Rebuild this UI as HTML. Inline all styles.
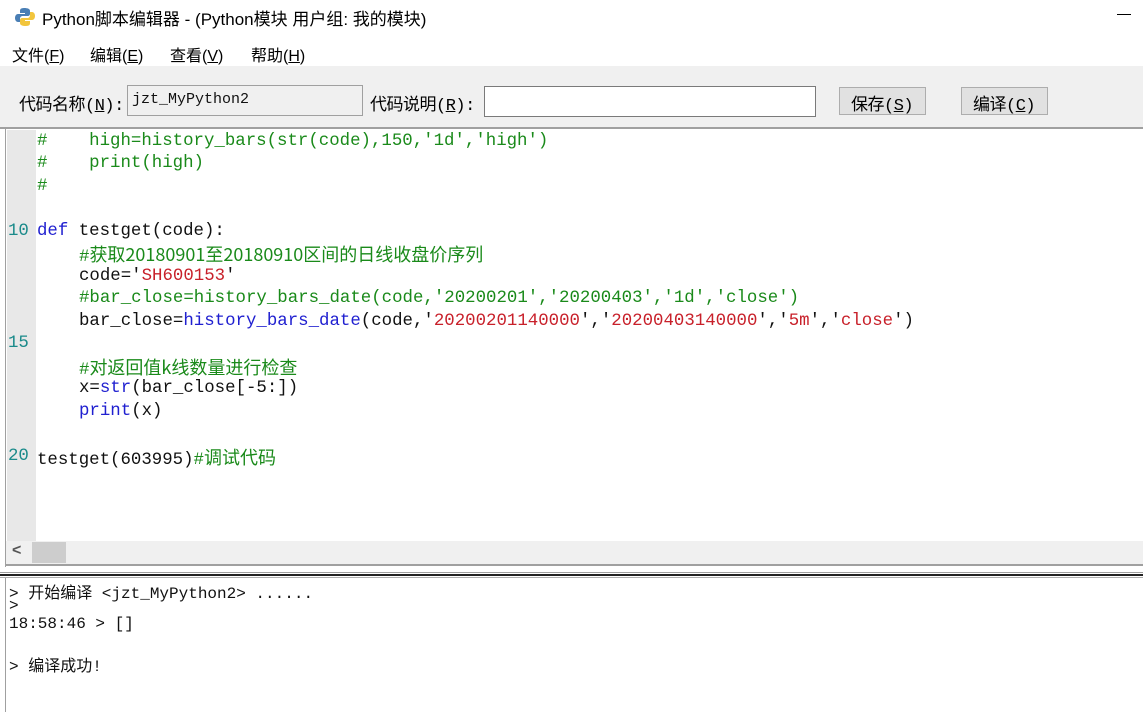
<!DOCTYPE html>
<html><head><meta charset="utf-8"><style>
*{margin:0;padding:0;box-sizing:border-box}
body{width:1143px;height:712px;overflow:hidden;background:#fff;position:relative;font-family:"Liberation Sans","Noto Sans CJK SC",sans-serif;}
.abs{position:absolute;white-space:pre}
.title{left:42px;top:5px;font-size:17px;color:#000}
.menu{top:42px;font-size:16px;color:#000}
.tb{position:absolute;left:0;top:66px;width:1143px;height:61px;background:#f0f0f0}
.lbl{font-family:"Liberation Mono","Noto Sans CJK SC",monospace;font-size:17px;color:#000;top:90px;letter-spacing:-0.5px}
.code{font-family:"Liberation Mono","Noto Sans CJK SC",monospace;font-size:17.4px;line-height:22px}
.cj{font-family:"Noto Sans CJK SC",sans-serif;font-size:18px;line-height:22px}
.g{color:#1a8a1a}.b{color:#2020d0}.r{color:#c8202a}.k{color:#111}.n{color:#1a8a8a}
.out{font-family:"Liberation Mono","Noto Sans CJK SC",monospace;font-size:16px;color:#111}
</style></head><body>
<svg class="abs" style="left:14px;top:6px" width="22" height="22" viewBox="0 0 22 22">
<path d="M10 2c-4 0-4 2-4 3v2h5v1H4c-2 0-3 2-3 4s1 4 3 4h2v-3c0-2 1-3 3-3h5c1 0 2-1 2-2V5c0-2-2-3-6-3z" fill="#4a7fb5"/>
<path d="M12 20c4 0 4-2 4-3v-2h-5v-1h7c2 0 3-2 3-4s-1-4-3-4h-2v3c0 2-1 3-3 3H8c-1 0-2 1-2 2v3c0 2 2 3 6 3z" fill="#f2c53d"/>
</svg>
<div class="abs title">Python脚本编辑器 - (Python模块 用户组: 我的模块)</div>
<div class="abs" style="left:1117px;top:14px;width:14px;height:1px;background:#000"></div>
<div class="abs menu" style="left:12px">文件(<u>F</u>)</div>
<div class="abs menu" style="left:90px">编辑(<u>E</u>)</div>
<div class="abs menu" style="left:170px">查看(<u>V</u>)</div>
<div class="abs menu" style="left:251px">帮助(<u>H</u>)</div>
<div class="tb"></div>
<div class="abs lbl" style="left:19px">代码名称(<u>N</u>):</div>
<div class="abs" style="left:127px;top:85px;width:236px;height:31px;border:1px solid #a0a0a0;background:#f0f0f0"></div>
<div class="abs code" style="left:132px;top:89px;font-size:15px;color:#111">jzt_MyPython2</div>
<div class="abs lbl" style="left:370px">代码说明(<u>R</u>):</div>
<div class="abs" style="left:484px;top:86px;width:332px;height:31px;border:1px solid #7a7a7a;background:#fff"></div>
<div class="abs" style="left:839px;top:87px;width:87px;height:28px;border:1px solid #adadad;background:#e1e1e1"></div>
<div class="abs lbl" style="left:851px;top:90px">保存(<u>S</u>)</div>
<div class="abs" style="left:961px;top:87px;width:87px;height:28px;border:1px solid #adadad;background:#e1e1e1"></div>
<div class="abs lbl" style="left:973px;top:90px">编译(<u>C</u>)</div>
<div class="abs" style="left:0;top:127px;width:1143px;height:2px;background:#a0a0a0"></div>
<div class="abs" style="left:5px;top:129px;width:1px;height:438px;background:#a0a0a0"></div>
<div class="abs" style="left:7px;top:130px;width:29px;height:411px;background:#e8e8e8"></div>
<div class="abs code" style="left:0;top:131px">
<div class="abs" style="left:37px;top:0"><span class="g">#    high=history_bars(str(code),150,'1d','high')</span></div>
<div class="abs" style="left:37px;top:22px"><span class="g">#    print(high)</span></div>
<div class="abs" style="left:37px;top:45px"><span class="g">#</span></div>
<div class="abs n" style="left:8px;top:90px">10</div>
<div class="abs" style="left:37px;top:90px"><span class="b">def</span> <span class="k">testget(code):</span></div>
<div class="abs g" style="left:79px;top:112px">#<span class="cj">获取20180901至20180910区间的日线收盘价序列</span></div>
<div class="abs" style="left:79px;top:135px"><span class="k">code='</span><span class="r">SH600153</span><span class="k">'</span></div>
<div class="abs g" style="left:79px;top:157px">#bar_close=history_bars_date(code,'20200201','20200403','1d','close')</div>
<div class="abs" style="left:79px;top:180px"><span class="k">bar_close=</span><span class="b">history_bars_date</span><span class="k">(code,'</span><span class="r">20200201140000</span><span class="k">','</span><span class="r">20200403140000</span><span class="k">','</span><span class="r">5m</span><span class="k">','</span><span class="r">close</span><span class="k">')</span></div>
<div class="abs n" style="left:8px;top:202px">15</div>
<div class="abs g" style="left:79px;top:225px">#<span class="cj">对返回值k线数量进行检查</span></div>
<div class="abs" style="left:79px;top:247px"><span class="k">x=</span><span class="b">str</span><span class="k">(bar_close[-5:])</span></div>
<div class="abs b" style="left:79px;top:270px">print<span class="k">(x)</span></div>
<div class="abs n" style="left:8px;top:315px">20</div>
<div class="abs" style="left:37px;top:315px"><span class="k">testget(603995)</span><span class="g">#<span class="cj">调试代码</span></span></div>
</div>
<div class="abs" style="left:6px;top:541px;width:1137px;height:23px;background:#f0f0f0"></div>
<div class="abs" style="left:32px;top:542px;width:34px;height:21px;background:#cdcdcd"></div>
<div class="abs" style="left:12px;top:542px;font-size:16px;color:#555;font-weight:bold">&lt;</div>
<div class="abs" style="left:5px;top:564px;width:1138px;height:2px;background:#a0a0a0"></div>
<div class="abs" style="left:0;top:572px;width:1143px;height:1px;background:#a0a0a0"></div>
<div class="abs" style="left:0;top:574px;width:1143px;height:2px;background:#222"></div>
<div class="abs" style="left:0;top:577px;width:1143px;height:1px;background:#b0b0b0"></div>
<div class="abs" style="left:5px;top:578px;width:1px;height:134px;background:#a0a0a0"></div>
<div class="abs out" style="left:9px;top:579px">&gt; 开始编译 &lt;jzt_MyPython2&gt; ......</div>
<div class="abs out" style="left:9px;top:597px">&gt;</div>
<div class="abs out" style="left:9px;top:615px">18:58:46 &gt; []</div>
<div class="abs out" style="left:9px;top:652px">&gt; 编译成功!</div>
</body></html>
